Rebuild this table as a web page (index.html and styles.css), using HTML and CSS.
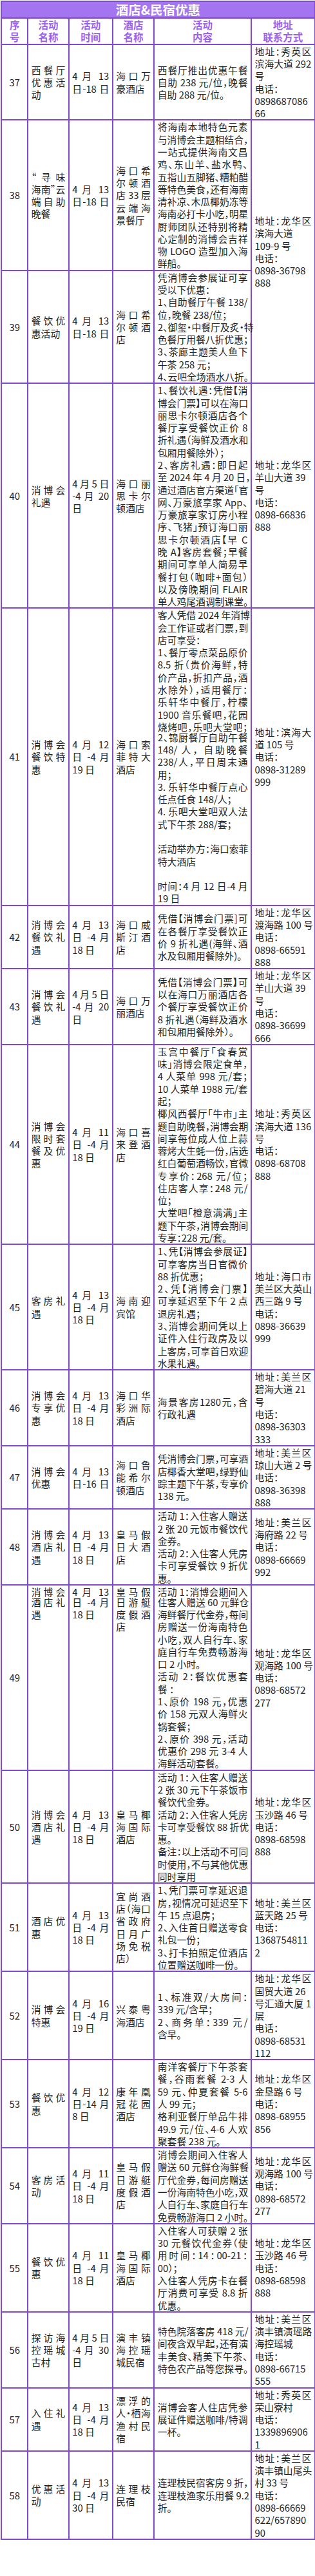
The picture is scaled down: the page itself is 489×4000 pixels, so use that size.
FILE: index.html
```html
<!DOCTYPE html>
<html lang="zh-CN">
<head>
<meta charset="utf-8">
<title>酒店&amp;民宿优惠</title>
<link rel="stylesheet" href="styles.css">
</head>
<body>
<table class="deals">
<colgroup>
<col class="w-no"><col class="w-name"><col class="w-time"><col class="w-hotel"><col class="w-desc"><col class="w-addr">
</colgroup>
<thead>
<tr><th class="title" colspan="6">酒店&amp;民宿优惠</th></tr>
<tr class="head"><th>序号</th><th>活动<br>名称</th><th>活动<br>时间</th><th>酒店<br>名称</th><th>活动<br>内容</th><th>地址<br>联系方式</th></tr>
</thead>
<tbody>
<tr>
<td class="no">37</td>
<td><span>西餐厅</span><span>优惠活</span><span>动</span></td>
<td><span>4 月 13</span><span>日-18 日</span></td>
<td><span>海口万</span><span class="e">豪酒店</span></td>
<td><span>西餐厅推出优惠午餐</span><span>自助 238 元/位，晚餐</span><span class="e">自助 288 元/位。</span></td>
<td><span>地址：秀英区</span><span>滨海大道 292</span><span>号</span><span class="e">电话：</span><span>0898687086</span><span>66</span></td>
</tr>
<tr>
<td class="no">38</td>
<td class="pb1"><span>“寻味</span><span>海南”云</span><span>端自助</span><span class="e">晚餐</span></td>
<td><span>4 月 13</span><span>日-18 日</span></td>
<td><span>海口希</span><span>尔顿酒</span><span>店 33 层</span><span>云端海</span><span class="e">景餐厅</span></td>
<td><span>将海南本地特色元素</span><span>与消博会主题相结合，</span><span>一站式提供海南文昌</span><span>鸡、东山羊、盐水鸭、</span><span>五指山五脚猪、糟粕醋</span><span>等特色美食，还有海南</span><span>清补凉、木瓜椰奶冻等</span><span>海南必打卡小吃，明星</span><span>厨师团队还特别将精</span><span>心定制的消博会吉祥</span><span>物 LOGO 造型加入海</span><span class="e">鲜船。</span></td>
<td rowspan="2" class="pt7"><span>地址：龙华区</span><span class="e">滨海大道</span><span class="e">109-9 号</span><span class="e">电话：</span><span>0898-36798</span><span>888</span></td>
</tr>
<tr>
<td class="no pt2">39</td>
<td class="pt2"><span>餐饮优</span><span class="e">惠活动</span></td>
<td class="pt2"><span>4 月 13</span><span>日-18 日</span></td>
<td class="pt2"><span>海口希</span><span>尔顿酒</span><span>店</span></td>
<td><span>凭消博会参展证可享</span><span class="e">受以下优惠：</span><span>1、自助餐厅午餐 138/</span><span class="e">位，晚餐 238/位；</span><span>2、御玺·中餐厅及炙·特</span><span>色餐厅用餐八折优惠；</span><span>3、茶廊主题美人鱼下</span><span class="e">午茶 258 元；</span><span class="e">4、云吧全场酒水八折。</span></td>
</tr>
<tr>
<td class="no pt4">40</td>
<td class="pt4"><span>消博会</span><span class="e">礼遇</span></td>
<td class="pt4"><span>4月5日</span><span>-4 月 20</span><span>日</span></td>
<td class="pt4"><span>海口丽</span><span>思卡尔</span><span class="e">顿酒店</span></td>
<td><span>1、餐饮礼遇：凭借【消</span><span>博会门票】可以在海口</span><span>丽思卡尔顿酒店各个</span><span>餐厅享受餐饮正价 8</span><span>折礼遇（海鲜及酒水和</span><span class="e">包厢用餐除外）；</span><span>2、客房礼遇：即日起</span><span>至 2024 年 4 月 20 日，</span><span>通过酒店官方渠道「官</span><span>网、万豪旅享家 App、</span><span>万豪旅享家订房小程</span><span>序、飞猪」预订海口丽</span><span>思卡尔顿酒店【早 C</span><span>晚 A】客房套餐；早餐</span><span>期间可享单人简易早</span><span>餐打包（咖啡+面包）</span><span>以及傍晚期间 FLAIR</span><span class="e">单人鸡尾酒调制课堂。</span></td>
<td class="pt2"><span>地址：龙华区</span><span class="e">羊山大道 39</span><span>号</span><span class="e">电话：</span><span>0898-66836</span><span>888</span></td>
</tr>
<tr>
<td class="no pb10">41</td>
<td class="pb10"><span>消博会</span><span>餐饮特</span><span>惠</span></td>
<td class="pb11"><span>4 月 12</span><span>日 -4 月</span><span class="e">19 日</span></td>
<td class="pb11"><span>海口索</span><span>菲特大</span><span class="e">酒店</span></td>
<td><span>客人凭借 2024 年消博</span><span>会工作证或者门票，到</span><span class="e">店可享受：</span><span>1、餐厅零点菜品原价</span><span>8.5 折（贵价海鲜，特</span><span>价产品，折扣产品，酒</span><span>水除外），适用餐厅：</span><span>乐轩华中餐厅，柠檬</span><span>1900 音乐餐吧，花园</span><span>烧烤吧，乐吧大堂吧；</span><span class="tight">2、锦厨餐厅自助午餐</span><span>148/ 人， 自助晚餐</span><span>238/人，平日周末通</span><span class="e">用；</span><span>3. 乐轩华中餐厅点心</span><span class="e">任点任食 148/人；</span><span>4. 乐吧大堂吧双人法</span><span class="e">式下午茶 288/套；</span><span class="e">&nbsp;</span><span>活动举办方：海口索菲</span><span class="e">特大酒店</span><span class="e">&nbsp;</span><span>时间：4 月 12 日-4 月</span><span class="e">19 日</span></td>
<td class="pb14"><span>地址：滨海大</span><span class="e">道 105 号</span><span class="e">电话：</span><span>0898-31289</span><span>999</span></td>
</tr>
<tr>
<td class="no">42</td>
<td><span>消博会</span><span>餐饮礼</span><span>遇</span></td>
<td><span>4 月 13</span><span>日 -4 月</span><span class="e">18 日</span></td>
<td><span>海口威</span><span>斯汀酒</span><span>店</span></td>
<td><span>凭借【消博会门票]可</span><span>在各餐厅享受餐饮正</span><span>价 9 折礼遇(海鲜、酒</span><span class="e">水及包厢用餐除外)。</span></td>
<td><span>地址：龙华区</span><span>渡海路 100 号</span><span class="e">电话：</span><span>0898-66591</span><span>888</span></td>
</tr>
<tr>
<td class="no">43</td>
<td><span>消博会</span><span>餐饮礼</span><span>遇</span></td>
<td><span>4月5日</span><span>-4 月 20</span><span>日</span></td>
<td><span>海口万</span><span class="e">丽酒店</span></td>
<td><span>凭借【消博会门票】可</span><span>以在海口万丽酒店各</span><span>个餐厅享受餐饮正价</span><span>8 折礼遇（海鲜及酒水</span><span class="e">和包厢用餐除外）。</span></td>
<td><span>地址：龙华区</span><span class="e">羊山大道 39</span><span>号</span><span class="e">电话：</span><span>0898-36699</span><span>666</span></td>
</tr>
<tr>
<td class="no pt2">44</td>
<td class="pt2"><span>消博会</span><span>限时套</span><span>餐及优</span><span>惠</span></td>
<td class="pt2"><span>4 月 11</span><span>日 -4 月</span><span class="e">18 日</span></td>
<td class="pt2"><span>海口喜</span><span>来登酒</span><span>店</span></td>
<td><span>玉宫中餐厅「食春赏</span><span>味」消博会限定食单，</span><span>4 人菜单 998 元/套；</span><span>10 人菜单 1988 元/套</span><span class="e">起；</span><span>椰风西餐厅「牛市」主</span><span>题自助晚餐，消博会期</span><span>间享每位成人位上蒜</span><span>蓉烤大生蚝一份，店选</span><span>红白葡萄酒畅饮，官微</span><span>专享价：268 元/位；</span><span>住店客人享：248 元/</span><span class="e">位；</span><span>大堂吧「橙意满满」主</span><span>题下午茶，消博会期间</span><span class="e">专享：228 元/套。</span></td>
<td class="pt2"><span>地址：秀英区</span><span>滨海大道 136</span><span>号</span><span class="e">电话：</span><span>0898-68708</span><span>888</span></td>
</tr>
<tr>
<td class="no pt3">45</td>
<td><span>客房礼</span><span>遇</span></td>
<td class="pb1"><span>4 月 13</span><span>日 -4 月</span><span class="e">18 日</span></td>
<td class="pb1"><span>海南迎</span><span class="e">宾馆</span></td>
<td class="pb1"><span>1、凭【消博会参展证】</span><span>可享客房当日官微价</span><span class="e">88 折优惠；</span><span>2、凭【消博会门票】</span><span>可享延迟至下午 2 点</span><span class="e">退房礼遇；</span><span>3、消博会期间凭以上</span><span>证件入住行政房及以</span><span>上客房，可享首日欢迎</span><span class="e">水果礼遇。</span></td>
<td class="pt2"><span>地址：海口市</span><span>美兰区大英山</span><span class="e">西三路 9 号</span><span class="e">电话：</span><span>0898-36639</span><span>999</span></td>
</tr>
<tr>
<td class="no">46</td>
<td><span>消博会</span><span>专享优</span><span>惠</span></td>
<td class="pb1"><span>4 月 13</span><span>日 -4 月</span><span class="e">18 日</span></td>
<td class="pb1"><span>海口华</span><span>彩洲际</span><span class="e">酒店</span></td>
<td class="pb1"><span>海景客房1280元，含</span><span class="e">行政礼遇</span></td>
<td><span>地址：美兰区</span><span class="e">碧海大道 21</span><span>号</span><span class="e">电话：</span><span>0898-36303</span><span>333</span></td>
</tr>
<tr>
<td class="no">47</td>
<td class="pb1"><span>消博会</span><span class="e">优惠</span></td>
<td class="pb1"><span>4 月 13</span><span>日-16 日</span></td>
<td><span>海口鲁</span><span>能希尔</span><span class="e">顿酒店</span></td>
<td><span>凭消博会门票，可享酒</span><span>店椰香大堂吧，绿野仙</span><span>踪主题下午茶，专享价</span><span class="e">138 元。</span></td>
<td><span>地址：美兰区</span><span>琼山大道 2 号</span><span class="e">电话：</span><span>0898-36398</span><span>888</span></td>
</tr>
<tr>
<td class="no pt1">48</td>
<td><span>消博会</span><span>酒店礼</span><span>遇</span></td>
<td><span>4 月 13</span><span>日 -4 月</span><span class="e">18 日</span></td>
<td class="pb1"><span>皇马假</span><span>日大酒</span><span>店</span></td>
<td><span>活动 1：入住客人赠送</span><span>2 张 20 元饭市餐饮代</span><span class="e">金券。</span><span>活动 2：入住客人凭房</span><span>卡可享受餐饮 9 折优</span><span class="e">惠。</span></td>
<td><span>地址：美兰区</span><span class="e">海府路 22 号</span><span class="e">电话：</span><span>0898-66669</span><span>992</span></td>
</tr>
<tr>
<td class="no pb4">49</td>
<td class="top"><span>消博会</span><span class="tight">酒店礼</span><span>遇</span></td>
<td class="top"><span>4 月 13</span><span class="tight">日 -4 月</span><span class="e">18 日</span></td>
<td class="top"><span>皇马假</span><span class="tight">日游艇</span><span>度假酒</span><span>店</span></td>
<td><span>活动 1：消博会期间入</span><span class="tight">住客人赠送 60 元鲜仓</span><span>海鲜餐厅代金券，每间</span><span>房赠送一份海南特色</span><span>小吃，双人自行车、家</span><span>庭自行车免费畅游海</span><span class="e">口 2 小时。</span><span>活动 2：餐饮优惠套</span><span class="e">餐 ：</span><span>1、原价 198 元，优惠</span><span>价 158 元双人海鲜火</span><span class="e">锅套餐；</span><span>2、原价 398 元，活动</span><span>优惠价 298 元 3-4 人</span><span class="e">海鲜活动套餐。</span></td>
<td class="pb6"><span>地址：龙华区</span><span>观海路 100 号</span><span class="e">电话：</span><span>0898-68572</span><span>277</span></td>
</tr>
<tr>
<td class="no pt3">50</td>
<td><span>消博会</span><span>酒店礼</span><span>遇</span></td>
<td><span>4 月 13</span><span>日 -4 月</span><span class="e">18 日</span></td>
<td class="pb1"><span>皇马椰</span><span>海国际</span><span class="e">酒店</span></td>
<td><span>活动 1：入住客人赠送</span><span>2 张 30 元下午茶饭市</span><span class="e">餐饮代金券。</span><span>活动 2：入住客人凭房</span><span>卡可享受餐饮 88 折优</span><span class="e">惠。</span><span>备注：以上活动不可同</span><span>时使用，不与其他优惠</span><span class="e">同时享用</span></td>
<td class="pt1"><span>地址：龙华区</span><span class="e">玉沙路 46 号</span><span class="e">电话：</span><span>0898-68598</span><span>888</span></td>
</tr>
<tr>
<td class="no pt4">51</td>
<td><span>酒店优</span><span>惠</span></td>
<td><span>4 月 13</span><span>日 -4 月</span><span class="e">18 日</span></td>
<td class="pb1"><span>宜尚酒</span><span>店（海口</span><span>省政府</span><span>日月广</span><span>场免税</span><span class="e">店）</span></td>
<td class="pb1"><span>1、凭门票可享延迟退</span><span>房，视情况可延迟至下</span><span class="e">午 15 点退房；</span><span>2、入住首日赠送零食</span><span class="e">礼包一份；</span><span>3、打卡拍照定位酒店</span><span class="e">位置赠送咖啡一份。</span></td>
<td class="pt2"><span>地址：美兰区</span><span class="e">蓝天路 25 号</span><span class="e">电话：</span><span>1368754811</span><span>2</span></td>
</tr>
<tr>
<td class="no">52</td>
<td><span>消博会</span><span class="e">特惠</span></td>
<td><span>4 月 16</span><span>日 -4 月</span><span class="e">19 日</span></td>
<td><span>兴泰粤</span><span class="e">海酒店</span></td>
<td class="pb1"><span>1、标准双/大房间：</span><span class="e">339 元/含早；</span><span>2、商务单：339 元/</span><span class="e">含早。</span></td>
<td><span>地址：龙华区</span><span class="e">国贸大道 26</span><span>号汇通大厦 1</span><span>层</span><span class="e">电话：</span><span>0898-68531</span><span>112</span></td>
</tr>
<tr>
<td class="no pt1">53</td>
<td><span>餐饮优</span><span>惠</span></td>
<td><span>4 月 12</span><span>日-14 月</span><span class="e">8 日</span></td>
<td><span>康年凰</span><span>冠花园</span><span class="e">酒店</span></td>
<td><span>南洋客餐厅下午茶套</span><span>餐，谷雨套餐 2-3 人</span><span>59 元、仲夏套餐 5-6</span><span class="e">人 99 元；</span><span>格利亚餐厅单品牛排</span><span>49.9 元/位、4-6 人欢</span><span class="e">聚套餐 238 元。</span></td>
<td><span>地址：龙华区</span><span class="e">金垦路 6 号</span><span class="e">电话：</span><span>0898-68955</span><span>856</span></td>
</tr>
<tr>
<td class="no pt1">54</td>
<td class="pt1"><span>客房活</span><span>动</span></td>
<td class="pt1"><span>4 月 11</span><span>日 -4 月</span><span class="e">18 日</span></td>
<td class="pt1"><span>皇马假</span><span>日游艇</span><span>度假酒</span><span>店</span></td>
<td><span>消博会期间入住客人</span><span>赠送 60 元鲜仓海鲜餐</span><span>厅代金券，每间房赠送</span><span>一份海南特色小吃，双</span><span>人自行车、家庭自行车</span><span>免费畅游海口 2 小时。</span></td>
<td><span>地址：龙华区</span><span>观海路 100 号</span><span class="e">电话：</span><span>0898-68572</span><span>277</span></td>
</tr>
<tr>
<td class="no pt1">55</td>
<td class="pt1"><span>餐饮优</span><span>惠</span></td>
<td class="pt1"><span>4 月 11</span><span>日 -4 月</span><span class="e">18 日</span></td>
<td class="pt1"><span>皇马椰</span><span>海国际</span><span class="e">酒店</span></td>
<td><span>入住客人可获赠 2 张</span><span>30 元餐饮代金券（使</span><span>用时间：14：00-21：</span><span class="e">00）；</span><span>入住客人凭房卡在餐</span><span>厅消费可享受 8.8 折</span><span class="e">优惠。</span></td>
<td><span>地址：龙华区</span><span class="e">玉沙路 46 号</span><span class="e">电话：</span><span>0898-68598</span><span>888</span></td>
</tr>
<tr>
<td class="no pt1">56</td>
<td class="pt1"><span>探访海</span><span>控瑶城</span><span class="e">古村</span></td>
<td class="pt1"><span>4月5日</span><span>-4 月 30</span><span>日</span></td>
<td class="pt1"><span>演丰镇</span><span>海控瑶</span><span class="e">城民宿</span></td>
<td><span>特色院落客房 418 元/</span><span>间夜含双早起，还有演</span><span>丰美食、精美下午茶、</span><span class="e">特色农产品等您探寻。</span></td>
<td><span>地址：美兰区</span><span>演丰镇演瑶路</span><span class="e">海控瑶城</span><span class="e">电话：</span><span>0898-66715</span><span>555</span></td>
</tr>
<tr>
<td class="no">57</td>
<td><span>入住礼</span><span>遇</span></td>
<td><span>4 月 13</span><span>日 -4 月</span><span class="e">18 日</span></td>
<td class="pb1"><span>漂浮的</span><span>人·栖海</span><span>渔村民</span><span>宿</span></td>
<td><span>消博会客人住店凭参</span><span>展证件赠送咖啡/特调</span><span class="e">一杯。</span></td>
<td class="pb1"><span>地址：秀英区</span><span class="e">荣山寮村</span><span class="e">电话：</span><span>1339896906</span><span>1</span></td>
</tr>
<tr>
<td class="no">58</td>
<td><span>优惠活</span><span>动</span></td>
<td><span>4 月 13</span><span>日 -4 月</span><span class="e">30 日</span></td>
<td><span>连理枝</span><span class="e">民宿</span></td>
<td class="pb1"><span>连理枝民宿客房 9 折，</span><span>连理枝渔家乐用餐 9.2</span><span class="e">折。</span></td>
<td><span>地址：美兰区</span><span>演丰镇山尾头</span><span class="e">村 33 号</span><span class="e">电话：</span><span>0898-66669</span><span>622/657890</span><span>90</span></td>
</tr>
</tbody>
</table>
</body>
</html>
```

FILE: styles.css
```css
html {
  background: #ffffff;
}

body {
  margin: 0;
  font-family: "Noto Sans CJK SC", "Noto Sans", "DejaVu Sans", sans-serif;
  color: #222222;
}

.deals {
  --lh: 19.28px;
  border-collapse: collapse;
  table-layout: fixed;
  width: 486.7px;
  margin: 1px 0 0 1px;
}

.w-no { width: 41.3px; }
.w-name { width: 63.4px; }
.w-time { width: 68px; }
.w-hotel { width: 64.6px; }
.w-desc { width: 150.7px; }
.w-addr { width: 98.7px; }

.deals th,
.deals td {
  border: 2px solid #8349cc;
  padding: 0 4.5px;
  vertical-align: middle;
}

.title {
  background: #a475f0;
  color: #ffffff;
  font-size: 19.5px;
  font-weight: 700;
  line-height: 23.7px;
  text-align: center;
}

.head th {
  color: #9d5ff0;
  font-size: 15.5px;
  font-weight: 700;
  line-height: 19.5px;
  text-align: center;
}

.deals td {
  font-size: 14.8px;
  line-height: var(--lh);
  font-feature-settings: "halt" 1;
  text-autospace: no-autospace;
}

.deals td > span {
  display: block;
  white-space: nowrap;
  text-align: justify;
  text-align-last: justify;
}

.deals td > span.e {
  text-align-last: left;
}

.deals td.no {
  text-align: center;
}

.deals td.top {
  vertical-align: top;
}

.tight {
  margin-top: -3.4px;
}

.pt1 { padding-top: var(--lh); }
.pt2 { padding-top: calc(var(--lh) * 2); }
.pt3 { padding-top: calc(var(--lh) * 3); }
.pt4 { padding-top: calc(var(--lh) * 4); }
.pt7 { padding-top: calc(var(--lh) * 7); }

.pb1 { padding-bottom: var(--lh); }
.pb4 { padding-bottom: calc(var(--lh) * 4); }
.pb6 { padding-bottom: calc(var(--lh) * 6); }
.pb10 { padding-bottom: calc(var(--lh) * 10); }
.pb11 { padding-bottom: calc(var(--lh) * 11); }
.pb14 { padding-bottom: calc(var(--lh) * 14); }
```
